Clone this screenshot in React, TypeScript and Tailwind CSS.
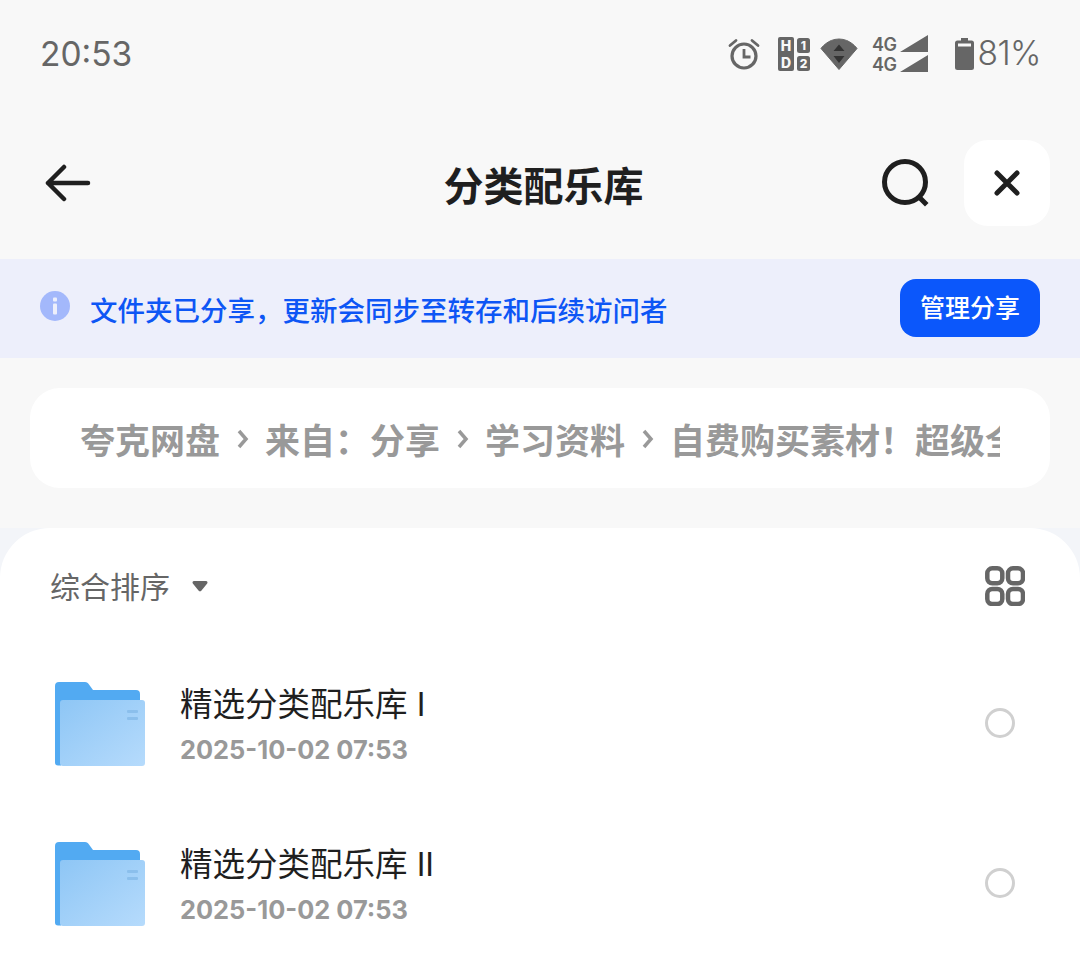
import React from "react";

const CJK = "font-['Inter','Noto_Sans_CJK_SC',sans-serif]";

// --- Status bar icons ---
const AlarmIcon = () => (
  <svg width="32" height="32" viewBox="0 0 32 32" fill="none" stroke="#666" strokeWidth="3.200">
    <circle cx="16" cy="18" r="12" />
    <path d="M16 11v8h6.500" strokeWidth="2.800" />
    <path d="M2 7.500 8 2.500M30 7.500 24 2.500" strokeWidth="2.800" strokeLinecap="round" />
  </svg>
);

const SimIcon = () => (
  <svg width="32" height="34" viewBox="0 0 32 34" fontFamily="Inter, sans-serif" fontWeight="800" textAnchor="middle">
    <rect x="0" y="0" width="16" height="34" rx="2" fill="#666" />
    <rect x="19" y="1" width="13" height="15" rx="2.500" fill="#666" />
    <rect x="19" y="19" width="13" height="15" rx="2.500" fill="#666" />
    <text x="8" y="13.500" fontSize="14" fill="#f8f8f8">H</text>
    <text x="8" y="31" fontSize="14" fill="#f8f8f8">D</text>
    <text x="25.500" y="13" fontSize="12" fill="#f8f8f8">1</text>
    <text x="25.500" y="31" fontSize="12" fill="#f8f8f8">2</text>
  </svg>
);

const WifiIcon = () => (
  <svg width="38" height="32" viewBox="0 0 38 32">
    <path d="M19 31.500 1 10.500C1 10.500 7.500 1 19 1s18 9.500 18 9.500Z" fill="#666" stroke="#666" strokeLinejoin="round" />
    <path d="M19 6.500l5.500 6.500h-11Z M19 25l-5.500-7h11Z" fill="#333" />
  </svg>
);

const DualSignal = () => (
  <svg width="57" height="42" viewBox="0 0 57 42" fontFamily="Inter, sans-serif" fontWeight="600" fontSize="18" fill="#666" letterSpacing="-0.5">
    <text x="0" y="16">4G</text>
    <text x="0" y="36">4G</text>
    <path d="M28 17 56 0v17Z M28 37l28-17v17Z" />
  </svg>
);

const BatteryIcon = () => (
  <svg width="19" height="32" viewBox="0 0 19 32" fill="#666">
    <path d="M6 0h7v2.500h3.500A2.500 2.500 0 0 1 19 5v24.500a2.500 2.500 0 0 1-2.500 2.500h-14A2.500 2.500 0 0 1 0 29.500V5a2.500 2.500 0 0 1 2.500-2.500H6Z" />
    <rect x="3" y="5.500" width="13" height="3" fill="#f8f8f8" />
  </svg>
);

// --- Folder artwork ---
const FolderIcon = () => (
  <svg width="90" height="84" viewBox="0 0 90 84" className="shrink-0">
    <defs>
      <linearGradient id="folderFront" x1="0" y1="0" x2="1" y2="1">
        <stop offset="0" stopColor="#8ec6f5" />
        <stop offset="1" stopColor="#b6dbfc" />
      </linearGradient>
    </defs>
    <path d="M4 0h26c2 0 3 1 4 2.500L38 8h43a4 4 0 0 1 4 4v60H0V4a4 4 0 0 1 4-4Z" fill="#52aaf2" />
    <path d="M0 20h6v63.500H3a3 3 0 0 1-3-3Z" fill="#52aaf2" />
    <path d="M8 18h79a3 3 0 0 1 3 3v60a3 3 0 0 1-3 3H8a3 3 0 0 1-3-3V21a3 3 0 0 1 3-3Z" fill="url(#folderFront)" />
    <rect x="72" y="28" width="11" height="3" rx="1" fill="#8bbfec" />
    <rect x="72" y="35" width="11" height="3" rx="1" fill="#8bbfec" />
  </svg>
);

// --- Breadcrumb ---
const crumbs = ["夸克网盘", "来自：分享", "学习资料", "自费购买素材！超级全面的配乐库"];

const Chevron = () => (
  <svg width="12" height="22" viewBox="0 0 12 22" fill="none" stroke="#999" strokeWidth="3.500" className="mx-[16.500px] -mt-[4px] shrink-0">
    <path d="m2 3 7 8-7 8" />
  </svg>
);

// --- File rows ---
interface FileRow {
  title: string;
  date: string;
}

const rows: FileRow[] = [
  { title: "精选分类配乐库 I", date: "2025-10-02 07:53" },
  { title: "精选分类配乐库 II", date: "2025-10-02 07:53" },
];

const App: React.FC = () => {
  return (
    <div className={`h-[973px] w-[1080px] overflow-hidden bg-[#f8f8f8] ${CJK}`}>
      {/* status bar */}
      <div className="flex h-[108px] items-center justify-between pl-[40px] pr-[39px]">
        <span className="pt-[2px] text-[33.500px] font-normal leading-none text-[#666]">20:53</span>
        <div className="flex items-center">
          <AlarmIcon />
          <div className="ml-[18px]"><SimIcon /></div>
          <div className="ml-[10px]"><WifiIcon /></div>
          <div className="ml-[14px] mt-[4px]"><DualSignal /></div>
          <div className="ml-[26px]"><BatteryIcon /></div>
          <span className="ml-[3px] text-[33.500px] font-light leading-none tracking-[-0.5px] text-[#666]">81%</span>
        </div>
      </div>

      {/* header */}
      <div className="mt-[32px] flex h-[86px] items-center pl-[45px] pr-[30px]">
        <svg width="46" height="40" viewBox="0 0 46 40" fill="none" stroke="#1f1f1f" strokeWidth="4.500" strokeLinecap="round" strokeLinejoin="round">
          <path d="M43 20H3M19 4 3 20 19 36" />
        </svg>
        <h1 className="flex-1 pl-[115px] pt-[8px] text-center text-[40px] font-bold leading-none text-[#1f1f1f]">分类配乐库</h1>
        <svg width="50" height="50" viewBox="0 0 50 50" fill="none" stroke="#1f1f1f" strokeWidth="5" className="mr-[33px]">
          <circle cx="24" cy="24" r="20.500" />
          <path d="m39 40 5 5" strokeLinecap="square" />
        </svg>
        <div className="flex h-[86px] w-[86px] items-center justify-center rounded-[24px] bg-white">
          <svg width="26" height="26" viewBox="0 0 26 26" fill="none" stroke="#1f1f1f" strokeWidth="5" strokeLinecap="round">
            <path d="m3 3 20 20M23 3 3 23" />
          </svg>
        </div>
      </div>

      {/* shared banner */}
      <div className="mt-[33px] flex h-[99px] items-center justify-between bg-[#edeffb] pl-[40px] pr-[40px]">
        <div className="flex items-center">
          <svg width="30" height="30" viewBox="0 0 30 30" className="-mt-[6px]">
            <circle cx="15" cy="15" r="15" fill="#a3b8fb" />
            <rect x="13" y="6.500" width="4" height="4" rx="1" fill="#edeffb" />
            <rect x="13" y="12.500" width="4" height="11" rx="1" fill="#edeffb" />
          </svg>
          <span className="ml-[20px] pt-[6px] text-[27.500px] font-medium leading-none text-[#0d56f5]">文件夹已分享，更新会同步至转存和后续访问者</span>
        </div>
        <button className="-mt-[1px] flex h-[58px] w-[140px] items-center justify-center rounded-[16px] bg-[#0b57fb] pt-[1px] text-[25px] font-medium leading-none text-white">管理分享</button>
      </div>

      {/* breadcrumb */}
      <div className="mx-[30px] mt-[30px] h-[100px] rounded-[30px] bg-white px-[50px]">
        <div className="flex h-full items-center overflow-hidden whitespace-nowrap pt-[6px] text-[35px] font-bold leading-none text-[#999]">
          {crumbs.map((c, i) => (
            <React.Fragment key={c}>
              {i > 0 && <Chevron />}
              <span className="shrink-0">{c}</span>
            </React.Fragment>
          ))}
        </div>
      </div>

      {/* file list card */}
      <div className="mt-[40px] bg-[#f3f5f9]">
        <div className="h-[445px] rounded-t-[50px] bg-white">
          <div className="flex h-[116px] items-center justify-between pl-[50px] pr-[54px]">
            <div className="flex items-center">
              <span className="pt-[2px] text-[30px] leading-none text-[#666]">综合排序</span>
              <svg width="18" height="14" viewBox="0 0 18 14" className="ml-[21px]">
                <path d="M3 2h12a1.500 1.500 0 0 1 1.200 2.400L10.500 11.500a2 2 0 0 1-3 0L1.800 4.400A1.500 1.500 0 0 1 3 2Z" fill="#666" />
              </svg>
            </div>
            <svg width="40" height="40" viewBox="0 0 40 40" fill="none" stroke="#666" strokeWidth="4.500" className="-translate-x-[1px]">
              <rect x="2.300" y="2.300" width="15" height="15" rx="5" />
              <rect x="23" y="2.300" width="15" height="15" rx="5" />
              <rect x="2.300" y="23" width="15" height="15" rx="5" />
              <rect x="23" y="23" width="15" height="15" rx="5" />
            </svg>
          </div>
          <div className="flex flex-col">
            {rows.map((row) => (
              <div key={row.title} className="flex h-[160px] items-center pl-[55px] pr-[65px]">
                <FolderIcon />
                <div className="ml-[35px] flex-1 pt-[4px]">
                  <div className="text-[32.500px] leading-[40px] text-[#1f1f1f]">{row.title}</div>
                  <div className="mt-[8px] text-[25.400px] font-bold leading-[34px] text-[#999]">{row.date}</div>
                </div>
                <div className="-mt-[2px] h-[30px] w-[30px] rounded-full border-[3px] border-[#d0d0d0]" />
              </div>
            ))}
          </div>
        </div>
      </div>
    </div>
  );
};

export default App;
